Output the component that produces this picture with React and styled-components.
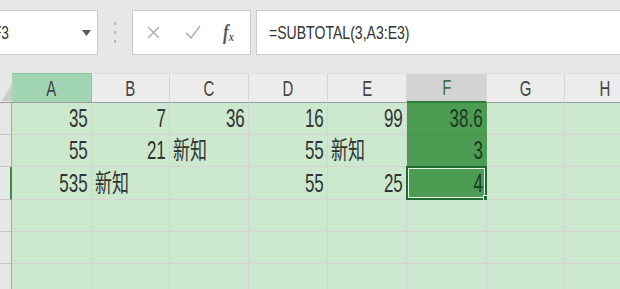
import React from "react";
import styled, { createGlobalStyle } from "styled-components";

const Global = createGlobalStyle`
  html, body { margin: 0; padding: 0; }
  body {
    width: 620px; height: 289px; overflow: hidden;
    background: #e7e7e7;
    font-family: "Liberation Sans", "Noto Sans CJK SC", sans-serif;
  }
`;

const Page = styled.div`
  width: 620px; height: 289px; overflow: hidden;
  display: flex; flex-direction: column;
`;

const Toolbar = styled.div`
  flex: none;
  height: 73px; box-sizing: border-box;
  padding: 10px 0 18px 0;
  display: flex; align-items: stretch;
`;

const NameBox = styled.div`
  width: 98px; box-sizing: border-box;
  background: #fff; border: 1px solid #cacaca; border-left: none;
  display: flex; align-items: center; justify-content: space-between;
  padding-right: 6px; overflow: hidden;
`;

const Squeeze = styled.span`
  display: inline-block; white-space: nowrap;
  transform: scaleX(${p => p.$sx || 0.7});
  transform-origin: ${p => p.$origin || "left"} center;
`;

const NameText = styled.span`
  font-size: 19px; color: #333; margin-left: -7px;
`;

const Sep = styled.div`
  width: 34px; display: flex; align-items: center; justify-content: center;
`;

const FuncBox = styled.div`
  width: 119px; box-sizing: border-box;
  background: #fff; border: 1px solid #cacaca;
  display: flex; align-items: center; padding-left: 14px; gap: 0;
`;

const IconSlot = styled.div`
  width: ${p => p.$w}px; display: flex; align-items: center; justify-content: ${p => p.$j || "flex-start"};
`;

const Fx = styled.span`
  font-family: "Liberation Serif", serif; font-style: italic; font-weight: bold;
  color: #555; font-size: 20px; line-height: 1;
  sub { font-size: 12px; vertical-align: -2px; font-weight: bold; }
`;

const FormulaBox = styled.div`
  flex: 1; margin-left: 5px; margin-right: -4px; box-sizing: border-box;
  background: #fff; border: 1px solid #cacaca;
  display: flex; align-items: center; padding-left: 12px;
  font-size: 19px; color: #333;
`;

const Grid = styled.div`
  flex: none;
  display: grid;
  grid-template-columns: 12px 80px 78px 79px 79px 79px 80px 78px 80px;
  grid-template-rows: 30px 32px 32px 33px 32px 32px 32px;
`;

const Corner = styled.div`
  background: #e7e7e7; border-bottom: 1px solid #9c9c9c;
  position: relative; overflow: hidden;
  display: flex; align-items: flex-end; justify-content: flex-end;
  box-sizing: border-box;
`;

const ColHead = styled.div`
  box-sizing: border-box;
  background: ${p => p.$state === "green" ? "#a2d6b3" : p.$state === "sel" ? "#d3d3d3" : "#ececec"};
  border-right: 1px solid ${p => p.$state === "green" ? "#8cc49e" : "#d6d6d6"};
  border-bottom: ${p => p.$state === "sel" ? "2px solid #2e7d3a" : "1px solid #9c9c9c"};
  border-top: 1px solid ${p => p.$state === "green" ? "#8cc49e" : "#e0e0e0"};
  display: flex; align-items: flex-end; justify-content: center;
  font-size: 22px; color: ${p => p.$state === "sel" ? "#3f6f49" : "#444"};
  padding-bottom: 1px; line-height: 1.1;
`;

const RowHead = styled.div`
  box-sizing: border-box;
  background: #e7e7e7;
  border-right: ${p => p.$active ? "2px solid #3a8a48" : "1px solid #a9a9a9"};
  border-bottom: 1px solid #c4c4c4;
  display: flex; align-items: center; justify-content: flex-end; overflow: hidden;
  font-size: 14px; color: #6a9ec2;
`;

const RowNum = styled.span`
  flex: none; width: 22px; text-align: center; margin-right: -16px;
`;

const Cell = styled.div`
  box-sizing: border-box;
  background: ${p => p.$sel ? "#4c9c54" : "#cce9d0"};
  border-right: 1px solid ${p => p.$sel ? "#4c9c54" : "#d9d2d4"};
  border-bottom: 1px solid ${p => p.$sel ? "#47944f" : "#d9d2d4"};
  display: flex; align-items: flex-end;
  justify-content: ${p => p.$left ? "flex-start" : "flex-end"};
  padding: 0 3px 2px 3px;
  font-size: 25px; line-height: 1.1; color: ${p => p.$sel ? "#1d3a22" : "#333"};
  white-space: nowrap; overflow: visible;
  position: relative;
`;

const ActiveFrame = styled.div`
  position: absolute; inset: -1px -1px -1px -1px;
  border: 2px solid #1f6b2e;
  box-shadow: inset 0 0 0 1px #e8f3e9;
  pointer-events: none;
`;

const Handle = styled.div`
  position: absolute; right: -4px; bottom: -4px; width: 5px; height: 6px;
  background: #1f6b2e; border: 1px solid #e8f3e9;
`;

const cols = ["A", "B", "C", "D", "E", "F", "G", "H"];

const data = [
  ["35", "7", "36", "16", "99", "38.6", "", ""],
  ["55", "21", "新知", "55", "新知", "3", "", ""],
  ["535", "新知", "", "55", "25", "4", "", ""],
  ["", "", "", "", "", "", "", ""],
  ["", "", "", "", "", "", "", ""],
  ["", "", "", "", "", "", "", ""],
];

const isText = v => /[^\d.]/.test(v);

export default function App() {
  return (
    <Page>
      <Global />
      <Toolbar>
        <NameBox>
          <NameText><Squeeze $sx={0.72}>F3</Squeeze></NameText>
          <svg width="9" height="6" viewBox="0 0 9 6"><path d="M0 0H9L4.5 6Z" fill="#5a5a5a" /></svg>
        </NameBox>
        <Sep>
          <svg width="4" height="28" viewBox="0 0 4 28">
            <rect x="1" y="3" width="2" height="3" fill="#b8b8b8" />
            <rect x="1" y="12" width="2" height="3" fill="#b8b8b8" />
            <rect x="1" y="21" width="2" height="3" fill="#b8b8b8" />
          </svg>
        </Sep>
        <FuncBox>
          <IconSlot $w={38}>
            <svg width="13" height="13" viewBox="0 0 13 13"><path d="M1 1L12 12M12 1L1 12" stroke="#b3b3b3" strokeWidth="1.6" /></svg>
          </IconSlot>
          <IconSlot $w={38}>
            <svg width="16" height="15" viewBox="0 0 16 15"><path d="M1 8L6 13L15 1" stroke="#b8b8b8" strokeWidth="1.8" fill="none" /></svg>
          </IconSlot>
          <IconSlot $w={22}>
            <Fx><Squeeze $sx={0.85}>f<sub>x</sub></Squeeze></Fx>
          </IconSlot>
        </FuncBox>
        <FormulaBox><Squeeze $sx={0.74}>=SUBTOTAL(3,A3:E3)</Squeeze></FormulaBox>
      </Toolbar>
      <Grid>
        <Corner>
          <svg width="10" height="18" viewBox="0 0 10 18"><path d="M10 0V17H0Z" fill="#cbcbcb" /></svg>
        </Corner>
        {cols.map(c => (
          <ColHead key={c} $state={c === "A" ? "green" : c === "F" ? "sel" : ""}>
            <Squeeze $sx={0.68} $origin="center">{c}</Squeeze>
          </ColHead>
        ))}
        {data.map((row, r) => (
          <React.Fragment key={r}>
            <RowHead $active={r === 2}><RowNum>{r + 1}</RowNum></RowHead>
            {row.map((v, c) => {
              const sel = c === 5 && r < 3;
              const left = v && isText(v);
              return (
                <Cell key={c} $sel={sel} $left={left}>
                  {v && <Squeeze $sx={0.68} $origin={left ? "left" : "right"}>{v}</Squeeze>}
                  {c === 5 && r === 2 && (<><ActiveFrame /><Handle /></>)}
                </Cell>
              );
            })}
          </React.Fragment>
        ))}
      </Grid>
    </Page>
  );
}
